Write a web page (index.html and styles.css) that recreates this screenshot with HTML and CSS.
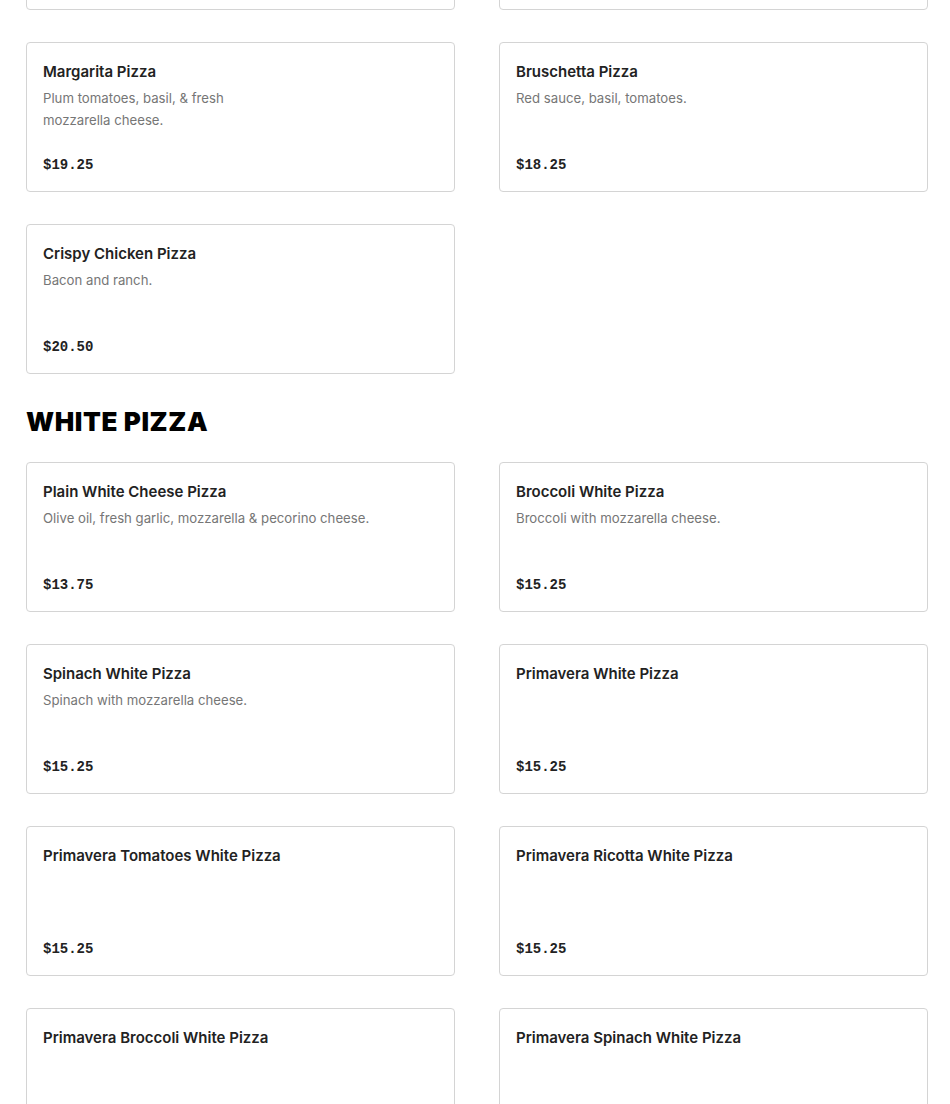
FILE: index.html
```html
<!DOCTYPE html>
<html lang="en">
<head>
<meta charset="utf-8">
<title>Menu</title>
<link rel="stylesheet" href="styles.css">
</head>
<body>
<main class="menu">
  <section class="section section-first">
    <div class="grid">
      <div class="card"></div>
      <div class="card"></div>
      <div class="card">
        <div class="name">Margarita Pizza</div>
        <div class="desc">Plum tomatoes, basil, &amp; fresh<br>mozzarella cheese.</div>
        <div class="price">$19.25</div>
      </div>
      <div class="card">
        <div class="name">Bruschetta Pizza</div>
        <div class="desc">Red sauce, basil, tomatoes.</div>
        <div class="price">$18.25</div>
      </div>
      <div class="card">
        <div class="name">Crispy Chicken Pizza</div>
        <div class="desc">Bacon and ranch.</div>
        <div class="price">$20.50</div>
      </div>
    </div>
  </section>

  <section class="section">
    <h2 class="section-title">WHITE PIZZA</h2>
    <div class="grid">
      <div class="card">
        <div class="name">Plain White Cheese Pizza</div>
        <div class="desc">Olive oil, fresh garlic, mozzarella &amp; pecorino cheese.</div>
        <div class="price">$13.75</div>
      </div>
      <div class="card">
        <div class="name">Broccoli White Pizza</div>
        <div class="desc">Broccoli with mozzarella cheese.</div>
        <div class="price">$15.25</div>
      </div>
      <div class="card">
        <div class="name">Spinach White Pizza</div>
        <div class="desc">Spinach with mozzarella cheese.</div>
        <div class="price">$15.25</div>
      </div>
      <div class="card">
        <div class="name">Primavera White Pizza</div>
        <div class="price">$15.25</div>
      </div>
      <div class="card">
        <div class="name">Primavera Tomatoes White Pizza</div>
        <div class="price">$15.25</div>
      </div>
      <div class="card">
        <div class="name">Primavera Ricotta White Pizza</div>
        <div class="price">$15.25</div>
      </div>
      <div class="card">
        <div class="name">Primavera Broccoli White Pizza</div>
        <div class="price">$15.25</div>
      </div>
      <div class="card">
        <div class="name">Primavera Spinach White Pizza</div>
        <div class="price">$15.25</div>
      </div>
    </div>
  </section>
</main>
</body>
</html>
```

FILE: styles.css
```css
html, body {
  margin: 0;
  padding: 0;
  background: #ffffff;
}

body {
  font-family: Inter, "Liberation Sans", sans-serif;
  color: #222222;
}

.menu {
  padding: 0 22px 0 26px;
}

.section-first {
  margin-top: -140px;
}

.grid {
  display: grid;
  grid-template-columns: 1fr 1fr;
  column-gap: 44px;
  row-gap: 32px;
}

.card {
  box-sizing: border-box;
  height: 150px;
  border: 1px solid #d4d4d4;
  border-radius: 4px;
  padding: 17px 16px 15px;
  display: flex;
  flex-direction: column;
}

.name {
  font-size: 15px;
  line-height: 24px;
  font-weight: 600;
  color: #222222;
}

.desc {
  margin-top: 3px;
  font-size: 13.2px;
  line-height: 22px;
  color: #767676;
}

.price {
  margin-top: auto;
  font-family: "Liberation Mono", monospace;
  font-weight: 700;
  font-size: 14px;
  line-height: 22px;
  color: #222222;
}

.section-title {
  margin: 33px 0 25px;
  font-family: Inter, "Liberation Sans", sans-serif;
  font-weight: 900;
  font-size: 26px;
  line-height: 30px;
  letter-spacing: 0.6px;
  color: #000000;
}
```
